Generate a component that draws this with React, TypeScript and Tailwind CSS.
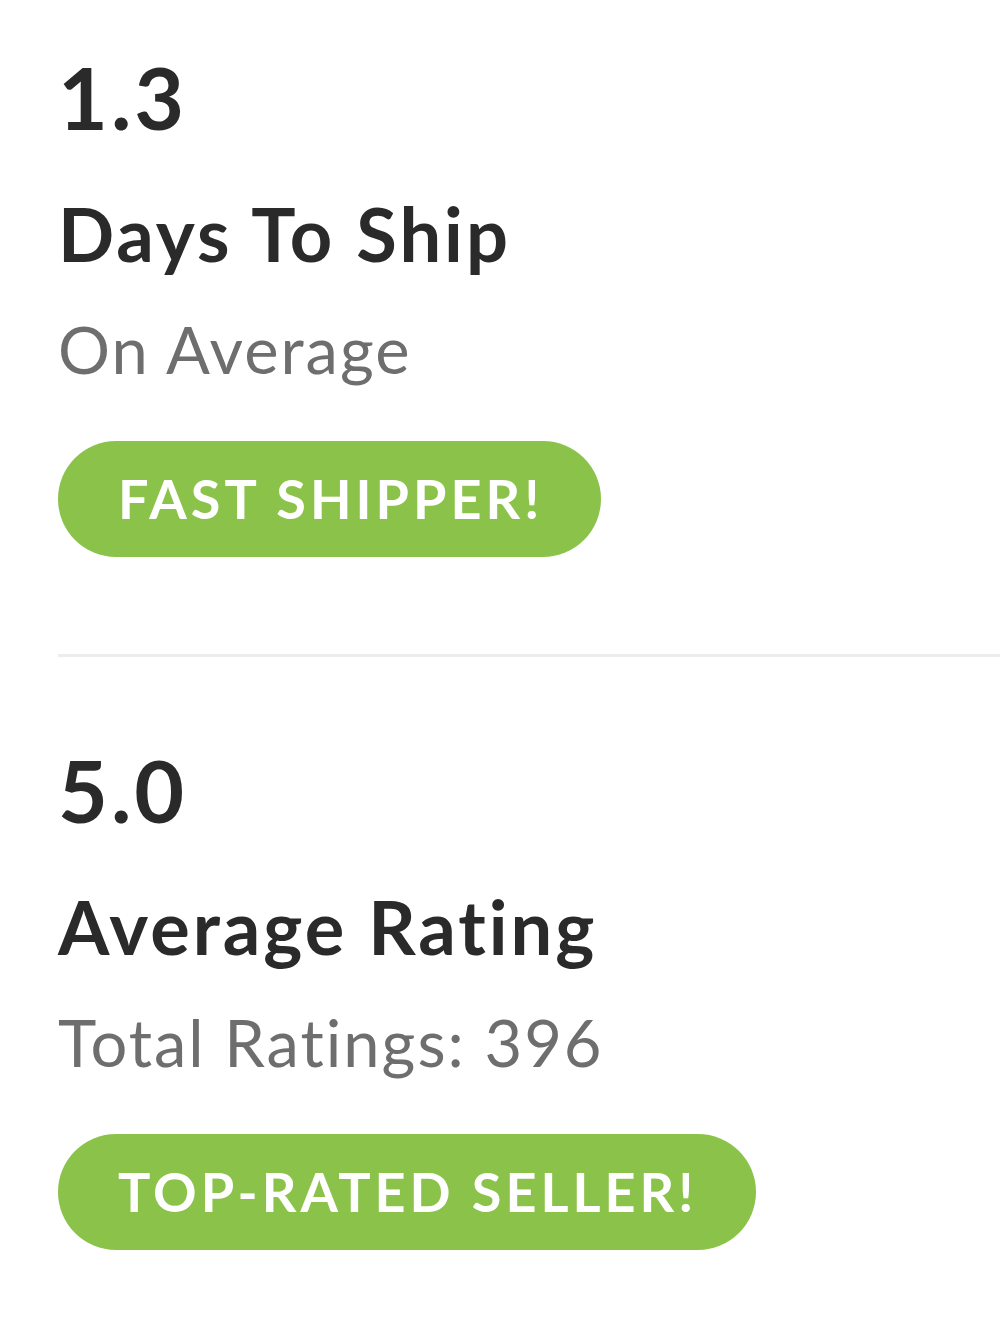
const stats = [
  { value: '1.3', title: 'Days To Ship', sub: 'On Average', badge: 'FAST SHIPPER!' },
  { value: '5.0', title: 'Average Rating', sub: 'Total Ratings: 396', badge: 'TOP-RATED SELLER!' },
]

function StatBlock({ value, title, sub, badge }: (typeof stats)[number]) {
  return (
    <div className="flex flex-col items-start">
      <div className="text-[86px] leading-none font-bold text-[#2a2a2a] tracking-[3px]">{value}</div>
      <div className="mt-[57px] text-[74px] leading-none font-bold text-[#2a2a2a] tracking-[3px]">{title}</div>
      <div className="mt-[46px] text-[65px] leading-none text-[#6e6e6e] tracking-[2px]">{sub}</div>
      <div className="mt-[59px] h-[116px] pl-[60px] pr-[58px] flex items-center rounded-full bg-[#8bc34a] text-white text-[54px] font-bold tracking-[4px] leading-none">
        {badge}
      </div>
    </div>
  )
}

export default function App() {
  return (
    <div className="min-h-screen bg-white pl-[58px] pt-[54px]" style={{ fontFamily: 'Lato, "Noto Sans", sans-serif' }}>
      <StatBlock {...stats[0]} />
      <div className="mt-[97px] mb-[90px] h-[3px] bg-[#efedea]" />
      <StatBlock {...stats[1]} />
    </div>
  )
}
